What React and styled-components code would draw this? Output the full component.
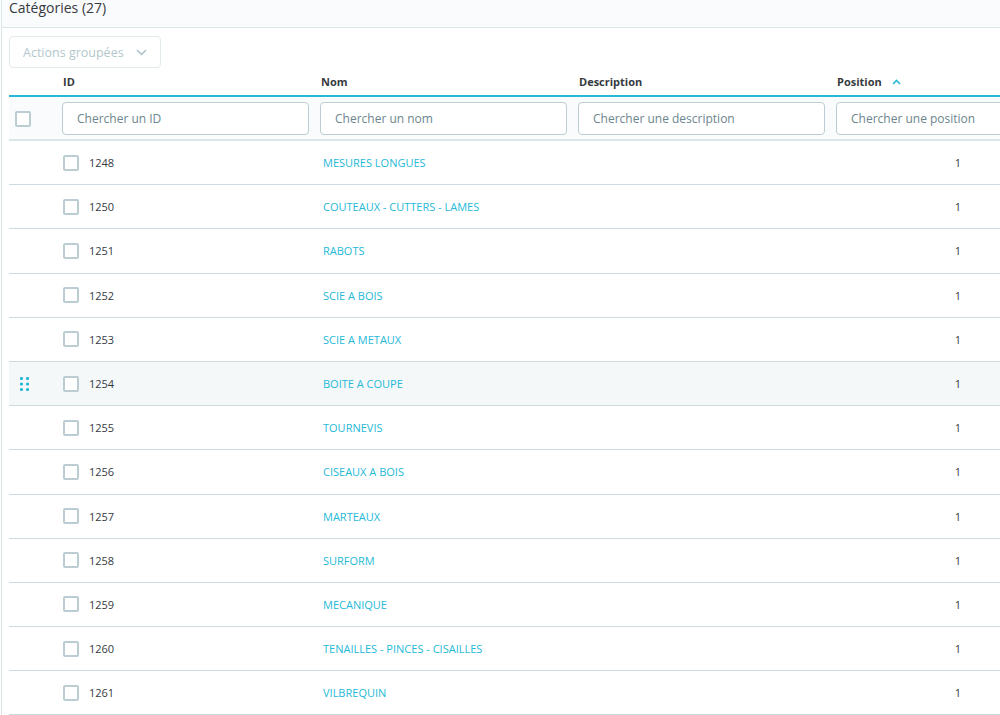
import React from "react";
import styled, { createGlobalStyle } from "styled-components";

const GlobalStyle = createGlobalStyle`
  html, body {
    margin: 0;
    padding: 0;
    background: #fff;
    overflow: hidden;
  }
  body {
    font-family: "Open Sans", "Noto Sans", sans-serif;
    color: #363a41;
  }
`;

const Card = styled.div`
  margin-left: 1px;
  border-left: 1px solid #dbe6e9;
  width: 1200px;
`;

const CardHeader = styled.div`
  height: 27px;
  padding-left: 7px;
  background: #fafbfc;
  border-bottom: 1px solid #dbe6e9;
  font-size: 14px;
  line-height: 15px;
  color: #363a41;
`;

const CardBody = styled.div`
  padding: 8px 0 0 7px;
`;

const ActionsButton = styled.button`
  display: flex;
  align-items: center;
  justify-content: space-between;
  width: 152px;
  height: 32px;
  padding: 0 13px 0 13px;
  border: 1px solid #e3eaed;
  border-radius: 4px;
  background: #fff;
  color: #b3c7cd;
  font-family: inherit;
  font-size: 12.5px;
`;

const Table = styled.table`
  border-collapse: collapse;
  table-layout: fixed;
  width: 1078px;
`;

const HeadCell = styled.th`
  height: 27px;
  padding: 0 8px;
  text-align: left;
  vertical-align: middle;
  font-size: 11px;
  font-weight: 700;
  color: #363a41;
  border-bottom: 2px solid #25b9d7;
`;

const FilterRow = styled.tr`
  background: #fafbfc;
  border-bottom: 2px solid #dbe6e9;
`;

const FilterCell = styled.td`
  height: 42px;
  padding: 0 ${(p) => (p.$first ? 6 : 4)}px 0 ${(p) => (p.$first ? 6 : 7)}px;
  vertical-align: middle;
`;

const SearchInput = styled.input`
  box-sizing: border-box;
  width: 100%;
  height: 33px;
  padding: 0 14px;
  border: 1px solid #bbcdd2;
  border-radius: 4px;
  font-family: inherit;
  font-size: 12px;
  color: #363a41;
  background: #fff;
  &::placeholder {
    color: #6c868e;
  }
`;

const Row = styled.tr`
  background: ${(p) => (p.$hover ? "#f5f8f9" : "#fff")};
  border-bottom: 1px solid #cddbe0;
`;

const Cell = styled.td`
  height: 43.2px;
  padding: 0 8px;
  vertical-align: middle;
  font-size: 11px;
  color: #363a41;
  text-align: ${(p) => p.$align || "left"};
`;

const IdWrap = styled.div`
  display: flex;
  align-items: center;
  gap: 10px;
`;

const Checkbox = styled.span`
  display: block;
  flex: none;
  box-sizing: border-box;
  width: 16px;
  height: 16px;
  margin-top: ${(p) => (p.$filter ? "2px" : "0")};
  border: 2px solid #bbcdd2;
  border-radius: 2px;
  background: #fff;
`;

const NameLink = styled.a`
  margin-left: 2px;
  color: #25b9d7;
  text-decoration: none;
  text-transform: uppercase;
`;

const DragHandle = styled.svg`
  display: block;
  margin-left: 3px;
`;

const SortCaret = styled.svg`
  margin-left: 10px;
  vertical-align: 1px;
`;

const categories = [
  [1248, "Mesures longues"],
  [1250, "Couteaux - cutters - lames"],
  [1251, "Rabots"],
  [1252, "Scie a bois"],
  [1253, "Scie a metaux"],
  [1254, "Boite a coupe"],
  [1255, "Tournevis"],
  [1256, "Ciseaux a bois"],
  [1257, "Marteaux"],
  [1258, "Surform"],
  [1259, "Mecanique"],
  [1260, "Tenailles - pinces - cisailles"],
  [1261, "Vilbrequin"],
];

export default function App() {
  return (
    <>
      <GlobalStyle />
      <Card>
        <CardHeader>Catégories (27)</CardHeader>
        <CardBody>
          <ActionsButton disabled>
            Actions groupées
            <svg width="11" height="7" viewBox="0 0 11 7">
              <path d="M1 1l4.5 4.5L10 1" fill="none" stroke="#a9c0c6" strokeWidth="1.5" />
            </svg>
          </ActionsButton>
          <Table>
            <colgroup>
              <col style={{ width: 46 }} />
              <col style={{ width: 258 }} />
              <col style={{ width: 258 }} />
              <col style={{ width: 258 }} />
              <col style={{ width: 258 }} />
            </colgroup>
            <thead>
              <tr>
                <HeadCell />
                <HeadCell>ID</HeadCell>
                <HeadCell>Nom</HeadCell>
                <HeadCell>Description</HeadCell>
                <HeadCell>
                  Position
                  <SortCaret width="9" height="6" viewBox="0 0 9 6">
                    <path d="M1 5l3.5-3.5L8 5" fill="none" stroke="#25b9d7" strokeWidth="1.6" />
                  </SortCaret>
                </HeadCell>
              </tr>
              <FilterRow>
                <FilterCell $first>
                  <Checkbox $filter />
                </FilterCell>
                <FilterCell>
                  <SearchInput placeholder="Chercher un ID" />
                </FilterCell>
                <FilterCell>
                  <SearchInput placeholder="Chercher un nom" />
                </FilterCell>
                <FilterCell>
                  <SearchInput placeholder="Chercher une description" />
                </FilterCell>
                <FilterCell>
                  <SearchInput placeholder="Chercher une position" />
                </FilterCell>
              </FilterRow>
            </thead>
            <tbody>
              {categories.map(([id, name]) => {
                const hover = id === 1254;
                return (
                  <Row key={id} $hover={hover}>
                    <Cell>
                      {hover && (
                        <DragHandle width="9" height="14" viewBox="0 0 9 14">
                          {[0, 1, 2].map((r) =>
                            [0, 1].map((c) => (
                              <circle key={`${r}-${c}`} cx={1.5 + c * 6} cy={1.5 + r * 5.5} r="1.6" fill="#25b9d7" />
                            ))
                          )}
                        </DragHandle>
                      )}
                    </Cell>
                    <Cell>
                      <IdWrap>
                        <Checkbox />
                        {id}
                      </IdWrap>
                    </Cell>
                    <Cell>
                      <NameLink href="#">{name}</NameLink>
                    </Cell>
                    <Cell />
                    <Cell $align="center">1</Cell>
                  </Row>
                );
              })}
            </tbody>
          </Table>
        </CardBody>
      </Card>
    </>
  );
}
